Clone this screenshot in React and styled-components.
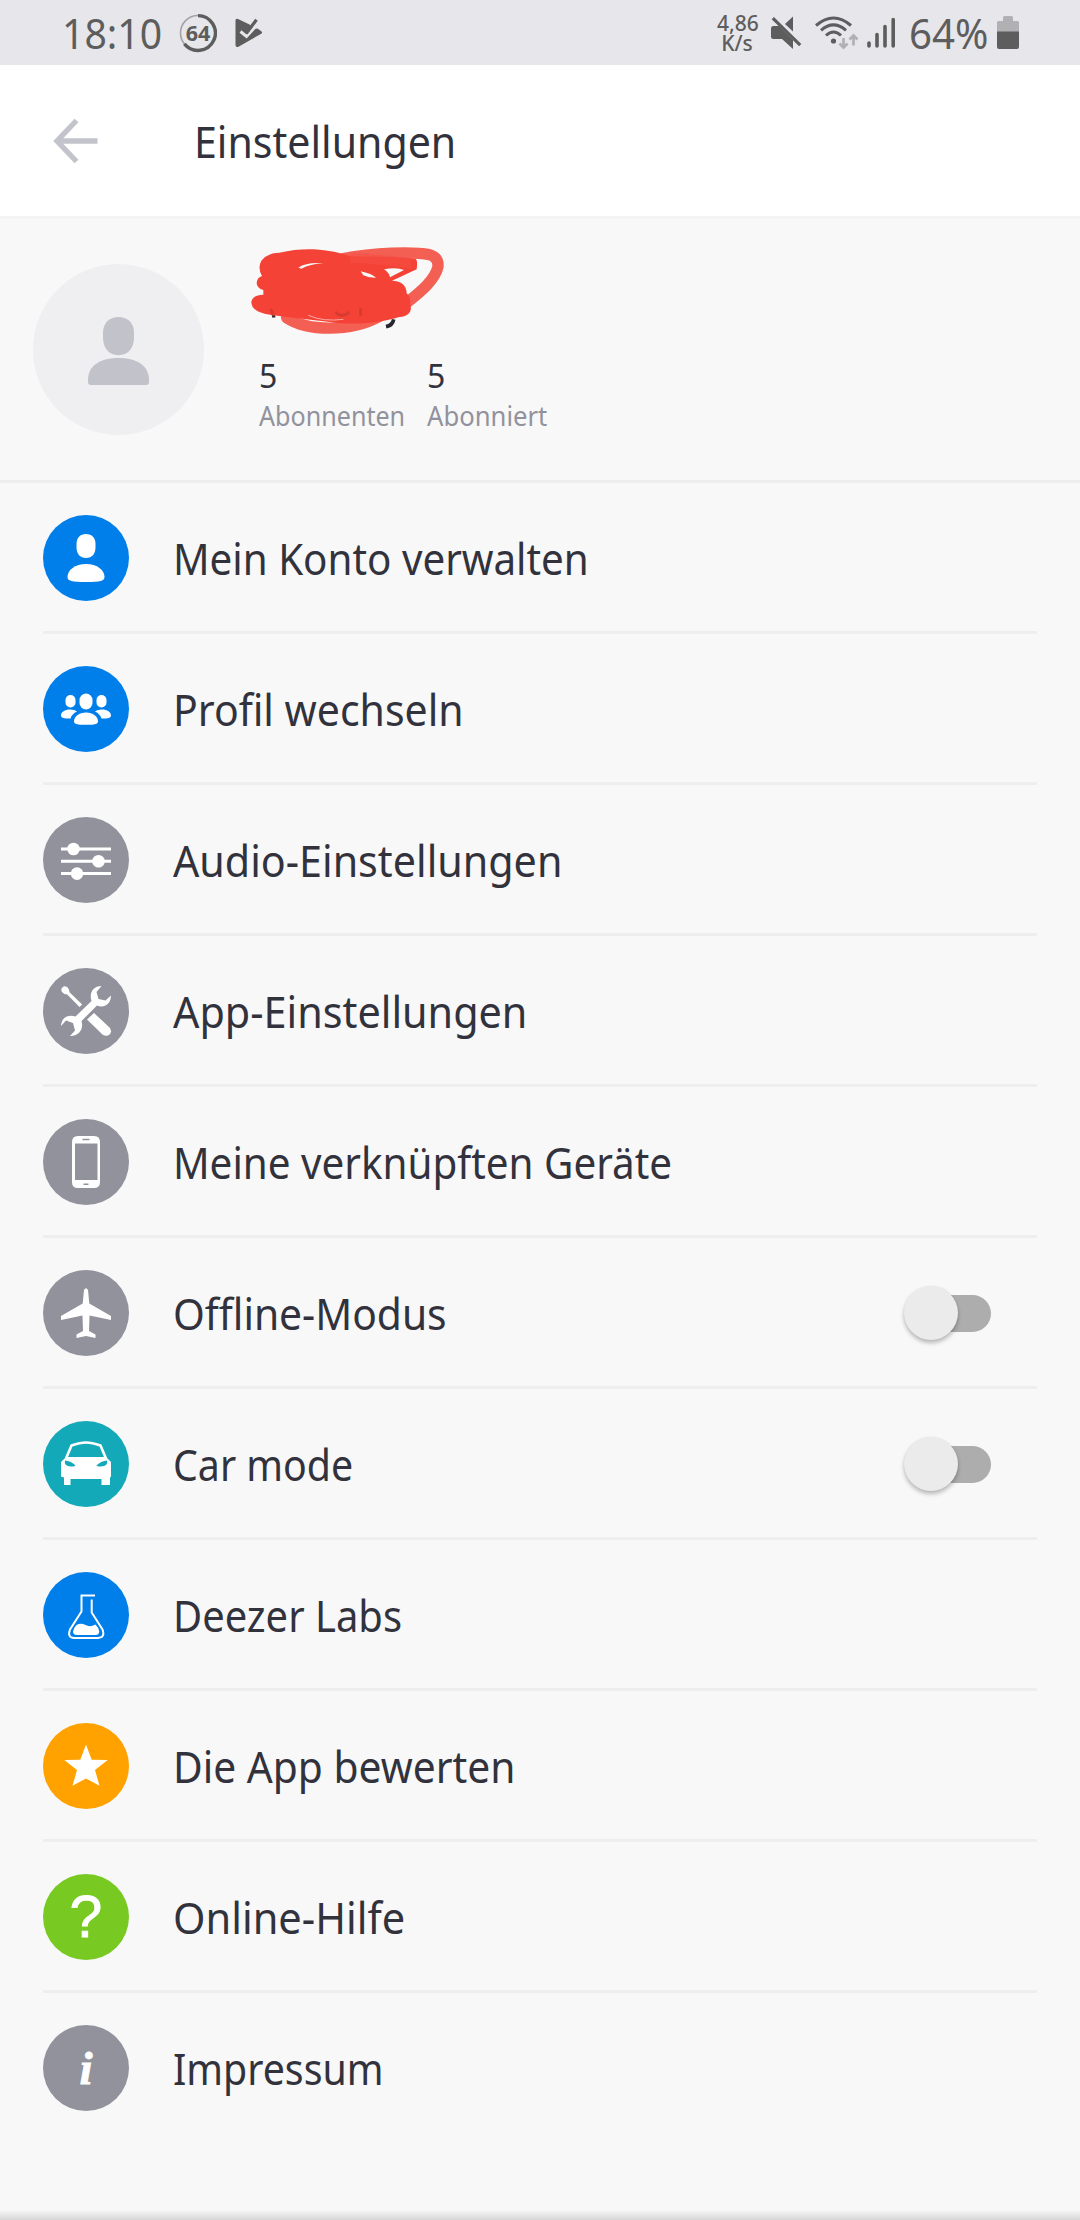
import React from 'react';
import styled, { createGlobalStyle } from 'styled-components';

const colors = {
  background: '#f8f8f8',
  statusBar: '#e7e6eb',
  status: '#5d5d5d',
  statusLight: '#b1b1b3',
  text: '#32323d',
  textLight: '#92929d',
  line: '#eeeeef',
  blue: '#007feb',
  gray: '#92929d',
  teal: '#14a9b8',
  orange: '#ffa200',
  green: '#78c922',
};

const GlobalStyle = createGlobalStyle`
  * {
    box-sizing: border-box;
  }

  body {
    margin: 0;
    background: ${colors.background};
    font-family: 'Noto Sans', 'Liberation Sans', sans-serif;
    color: ${colors.text};
  }
`;

const Screen = styled.div`
  display: flex;
  flex-direction: column;
  width: 1080px;
  height: 2220px;
  background: ${colors.background};
  overflow: hidden;

  svg {
    display: block;
    flex: none;
  }
`;

/* Labels keep their size but are drawn a little narrower */
const Text = styled.span`
  display: block;
  white-space: nowrap;
  transform: scaleX(${props => props.$stretch || 1});
  transform-origin: 0 50%;
`;

const StatusBar = styled.header`
  display: flex;
  justify-content: space-between;
  height: 65px;
  padding: 0 61px 0 62px;
  background: ${colors.statusBar};
  color: ${colors.status};
`;

const StatusGroup = styled.div`
  display: flex;
  align-items: center;
`;

const StatusIcon = styled.span`
  display: flex;
  margin-right: ${props => props.$gap || 0}px;
`;

const Clock = styled(Text)`
  width: 117px;
  font-size: 41px;
  line-height: 66px;
`;

const Speed = styled.div`
  width: 40px;
  margin-right: 14px;
  font-size: 21px;
  font-weight: 500;
  line-height: 20px;
  text-align: center;
  white-space: nowrap;
`;

const Percent = styled(Text)`
  width: 88px;
  font-size: 41px;
  line-height: 66px;
`;

const Header = styled.div`
  display: flex;
  align-items: center;
  height: 154px;
  padding-left: 52px;
  background: white;
  border-bottom: 3px solid #f3f3f4;
`;

const BackButton = styled.button`
  display: flex;
  width: 142px;
  padding: 0;
  border: 0;
  background: none;
`;

const Title = styled.h1`
  margin: 0;
  padding-top: 1px;
  font-size: 43px;
  font-weight: 400;
`;

const Profile = styled.section`
  display: flex;
  height: 264px;
  padding: 17px 33px 0;
  border-bottom: 3px solid ${colors.line};
`;

const Avatar = styled.div`
  display: flex;
  align-items: center;
  justify-content: center;
  flex: none;
  width: 171px;
  height: 171px;
  margin-top: 28px;
  border-radius: 50%;
  background: #efeff1;
`;

const ProfileInfo = styled.div`
  display: flex;
  flex-direction: column;
  margin-left: 36px;
`;

const Stats = styled.div`
  display: flex;
  margin: 7px 0 0 19px;
`;

const Stat = styled.div`
  width: 168px;
`;

const StatValue = styled.div`
  font-size: 32px;
  line-height: 46px;
`;

const StatLabel = styled(Text)`
  font-size: 27px;
  line-height: 34px;
  color: ${colors.textLight};
`;

const Menu = styled.ul`
  margin: 0;
  padding: 0 43px;
  list-style: none;
`;

const MenuItem = styled.li`
  display: flex;
  align-items: center;
  height: 151px;
  padding: 3px 46px 1px 0;
  border-bottom: 3px solid ${colors.line};

  &:last-child {
    border-bottom-color: transparent;
  }
`;

const IconCircle = styled.div`
  display: flex;
  align-items: center;
  justify-content: center;
  flex: none;
  width: 86px;
  height: 86px;
  margin-right: 44px;
  border-radius: 50%;
  background: ${props => props.$color};
  color: white;
`;

const Label = styled(Text)`
  flex: 1;
  padding-top: 2px;
  font-size: 43px;
  line-height: 58px;
`;

const QuestionMark = styled.span`
  font-family: 'Liberation Sans', Arial, sans-serif;
  font-size: 59px;
  line-height: 86px;
  -webkit-text-stroke: 0.8px currentColor;
`;

const InfoMark = styled.span`
  font-family: 'Liberation Serif', serif;
  font-size: 47px;
  font-style: italic;
  font-weight: 700;
  line-height: 84px;
  -webkit-text-stroke: 0.8px currentColor;
`;

const Switch = styled.button`
  display: flex;
  align-items: center;
  flex: none;
  padding: 0;
  border: 0;
  background: none;
`;

const Thumb = styled.span`
  z-index: 1;
  width: 54px;
  height: 54px;
  margin-right: -27px;
  border-radius: 50%;
  background: #ebebeb;
  box-shadow: 0 3px 4px rgba(0, 0, 0, 0.26), 0 0 2px rgba(0, 0, 0, 0.06);
`;

const Track = styled.span`
  width: 60px;
  height: 37px;
  border-radius: 19px;
  background: #adadad;
`;

const BottomShade = styled.div`
  flex: none;
  height: 10px;
  margin-top: auto;
  background: linear-gradient(#f7f7f7, #d6d6d6);
`;

const BatteryRing = () => (
  <svg width="38" height="40" viewBox="0 0 38 40">
    <circle cx="19" cy="20" r="17.5" fill="none" stroke="#a3a3a6" strokeWidth="1.6" />
    <path d="M19 2.6A17.4 17.4 0 1 1 5.4 30.9" fill="none" stroke={colors.status} strokeWidth="3.4" />
    <text x="19" y="27.6" textAnchor="middle" fontFamily="Noto Sans, sans-serif" fontSize="21.5" fontWeight="700" fill={colors.status}>64</text>
  </svg>
);

const PlayCheck = () => (
  <svg width="28" height="30" viewBox="0 0 28 30">
    <path d="M.5 2.500Q.5 0 3 1L14.500 6.500 19.500 11 22.500 10.500 26.300 13.200Q28 14.500 26.300 15.700L3.500 28.700Q.5 30 .5 27Z" fill={colors.status} />
    <path d="M5.500 13.500l6 5L20 9" fill="none" stroke={colors.statusBar} strokeWidth="3" />
    <path d="M9 10.500l3.300 3.500L21.500 1.800" fill="none" stroke={colors.status} strokeWidth="3.200" />
  </svg>
);

const MuteIcon = () => (
  <svg width="32" height="34" viewBox="0 0 32 34">
    <path d="M0 12.5Q0 10 2.5 10H8L22 24v9L11 23H2.5Q0 23 0 20.5Z" fill={colors.status} />
    <path d="M14 8l8-7.5v15Z" fill={colors.status} />
    <path d="M1.8 2.2l27.4 27" stroke={colors.status} strokeWidth="3.2" />
  </svg>
);

const WifiIcon = () => (
  <svg width="45" height="34" viewBox="0 0 45 34">
    <g fill="none" stroke={colors.status} strokeWidth="3">
      <path d="M1 9.5Q18.5-5.5 36 9.5" />
      <path d="M6 14.3Q18.5 3.5 31 14.3" />
      <path d="M11 19.5Q18.5 12.5 26 19.5" />
    </g>
    <circle cx="18.5" cy="25" r="2.6" fill={colors.status} />
    <path d="M28.5 22v10M24.5 27.5l4 4 4-4M38.5 29.5V19M34.5 23.5l4-4 4 4" fill="none" stroke={colors.statusLight} strokeWidth="2.7" />
  </svg>
);

const SignalIcon = () => (
  <svg width="29" height="31" viewBox="0 0 29 31">
    <path d="M2 26v3M10 17.5V29M18 9.5V29M26.2 2.5V29" fill="none" stroke={colors.status} strokeWidth="3.6" strokeLinecap="round" />
  </svg>
);

const BatteryIcon = () => (
  <svg width="22" height="34" viewBox="0 0 22 34">
    <path d="M6 5V1.5Q6 0 7.5 0h7Q16 0 16 1.5V5h4.500Q22 5 22 6.500V16H0V6.500Q0 5 1.500 5Z" fill={colors.statusLight} />
    <path d="M0 15.500h22V31q0 2-2 2H2q-2 0-2-2Z" fill={colors.status} />
  </svg>
);

const BackIcon = () => (
  <svg width="48" height="48" viewBox="0 0 48 48">
    <path d="M45.500 24H6M24.500 3.500L5 24l19.500 20.500" fill="none" stroke="#c3c3cb" strokeWidth="5.400" />
  </svg>
);

const AvatarIcon = () => (
  <svg width="61" height="70" viewBox="0 0 61 70">
    <path d="M30.500 0C40 0 46 6.500 46 16v5c0 11-6 18-15.500 18S15 32 15 21v-5C15 6.500 21 0 30.500 0Z" transform="translate(0 2) scale(1 .98)" fill="#c2c2cb" />
    <path d="M0 65C0 50 13 43 30.500 43S61 50 61 65v2q0 3-3 3H3q-3 0-3-3Z" fill="#c2c2cb" />
  </svg>
);

/* Red marker strokes that hide the profile name */
const Scribble = () => (
  <svg width="220" height="110" viewBox="0 0 660 330">
    <path d="M438 272q20-4 23-22" fill="none" stroke="#26262f" strokeWidth="11" />
    <path d="M96 241h10" stroke="#26262f" strokeWidth="7" />
    <g fill="none" stroke="#f45f54" strokeLinecap="round" strokeLinejoin="round">
      <path d="M310 68C400 50 520 46 568 56Q596 64 594 92C586 130 545 165 500 200" strokeWidth="34" />
      <path d="M140 245C200 285 330 290 420 240" strokeWidth="34" />
    </g>
    <path d="M330 60C400 62 470 62 526 68Q534 72 530 100L456 134C480 134 500 146 500 172Q514 184 510 205C520 228 500 244 478 243C420 262 330 268 270 258L140 243L90 236Q34 228 34 198Q36 178 70 176V162Q50 156 50 140Q52 124 66 120Q52 96 64 74Q84 50 118 50C190 34 255 36 330 60Z" fill="#f44336" />
    <path d="M175 95Q200 78 250 82Q210 84 184 98ZM362 106Q392 112 408 125Q386 126 370 118ZM432 100Q470 92 492 102L450 124Q448 110 432 100Z" fill={colors.background} />
    <path d="M330 66C400 66 470 78 512 82" fill="none" stroke="#f55045" strokeWidth="30" opacity="0.5" />
    <path d="M205 238Q250 258 310 250" fill="none" stroke="#f8aaa3" strokeWidth="3" />
    <g fill="none" stroke="#c9362e" strokeWidth="9" opacity="0.6">
      <path d="M92 218l8 22M286 228q20 20 42 0M362 216v24" />
    </g>
  </svg>
);

const AccountIcon = () => (
  <svg width="52" height="52" viewBox="0 0 52 52" fill="currentColor">
    <path d="M26 2c6 0 9.500 4 9.500 10v3C35.500 22 32 26 26 26s-9.500-4-9.500-11v-3C16.500 6 20 2 26 2Z" />
    <path d="M26 32c11 0 18.500 6 18.500 13 0 4-4 5-18.500 5S7.500 49 7.500 45c0-7 7.500-13 18.500-13Z" />
  </svg>
);

const GroupIcon = () => (
  <svg width="52" height="52" viewBox="0 0 52 52" fill="currentColor">
    <rect x="19.500" y="10.500" width="13" height="16" rx="6.500" />
    <rect x="5.500" y="12" width="10" height="12.500" rx="5" />
    <rect x="36.500" y="12" width="10" height="12.500" rx="5" />
    <path d="M26 29.500c7 0 12 4 12 9 0 2.500-3 3.300-12 3.300s-12-.8-12-3.300c0-5 5-9 12-9Z" />
    <path d="M10 26.500c3 0 5.500.8 7 2-3.500 1.500-5.500 4-6.500 7C4 35.500 1 35 1 32.500c0-3.500 4-6 9-6ZM42 26.500c-3 0-5.500.8-7 2 3.500 1.500 5.500 4 6.500 7 6.500 0 9.500-.5 9.500-3 0-3.500-4-6-9-6Z" />
  </svg>
);

const SlidersIcon = () => (
  <svg width="52" height="52" viewBox="0 0 52 52" fill="currentColor">
    <path d="M1 15h50M1 27.300h50M1 39.600h50" stroke="currentColor" strokeWidth="3" />
    <circle cx="13.500" cy="15" r="6.300" />
    <circle cx="38.500" cy="27.300" r="6.300" />
    <circle cx="17" cy="39.600" r="6.300" />
  </svg>
);

const ToolsIcon = () => (
  <svg width="52" height="52" viewBox="0 0 52 52" fill="currentColor">
    <path d="M3.500 1.500Q7 .5 9 4.500l.5 2.700L22.200 19.500 19.500 22 7.200 9.500 4.500 9Q.5 6.500 1.500 3.500Z" />
    <path d="M34 28l15.500 14.500q3 4 0 7-3 2.500-7 0L27 34.500Z" />
    <path d="M41.500 1C33 1 29 8 31.500 16L15.500 31.500C9 29 1.500 32 1 41l5-5.500 7 2.500 2 7.500-5 5.500c9 .5 14-7 11.500-15l15.500-15.500C44 23.500 51 19 51 10.500l-5.500 5-7-1.500-2-7Z" />
  </svg>
);

const PhoneIcon = () => (
  <svg width="28" height="52" viewBox="0 0 28 52">
    <path fillRule="evenodd" fill="currentColor" d="M6 0h16q6 0 6 6v40q0 6-6 6H6q-6 0-6-6V6q0-6 6-6ZM3 7.500v36.500h22.500V7.500ZM10.500 2.800v1.400h7V2.800ZM11.500 47.600v1.400h5v-1.400Z" />
  </svg>
);

const PlaneIcon = () => (
  <svg width="52" height="52" viewBox="0 0 52 52" fill="currentColor">
    <path d="M24 3q2-3.500 4 0l1.300 13.500L51 29v4L29.500 28.500 29 44l6.500 3.500V51L26 49l-9.500 2v-3.500L23 44l-.5-15.500L1 33v-4l21.700-12.500Z" />
  </svg>
);

const CarIcon = () => (
  <svg width="52" height="52" viewBox="0 0 52 52">
    <path d="M6 20.500L11.500 7.500Q20 4.500 26 4.500t14.500 3L46 20.500" fill="none" stroke="currentColor" strokeWidth="2.600" strokeLinejoin="round" />
    <path fillRule="evenodd" fill="currentColor" d="M6 19h40l5 5v14.500l-1 1V47h-8.500v-6h-31v6H4v-7.500l-3-1V24ZM5 22.500q-1.500 5.500 6 6 4 .3 4.500-1Q11 23 5 22.500ZM47 22.500Q41 23 36.500 27.500q.5 1.300 4.500 1 7.500-.5 6-6Z" />
  </svg>
);

const FlaskIcon = () => (
  <svg width="52" height="52" viewBox="0 0 52 52">
    <path d="M35 6.500H21.500V22.500L10 40.500Q7 48.500 14 49H38Q45.500 48.500 42.500 40.500L31.700 23.500V10.500" fill="none" stroke="currentColor" strokeWidth="2" />
    <path d="M16.500 36Q21 33.500 25.500 36t10-.500Q39 39 39.300 42.500 39 46 35.500 46H17Q13 46 13 42.500 13.500 39 16.500 36Z" fill="currentColor" />
  </svg>
);

const StarIcon = () => (
  <svg width="52" height="52" viewBox="0 0 52 52" fill="currentColor">
    <path d="M26 4.500l5.700 15.200 16 .3L35 30l4.500 15.800L26 38.500l-13.500 7.300L17 30 4.300 20l16-.3Z" />
  </svg>
);

const menuItems = [
  { label: 'Mein Konto verwalten', color: colors.blue, icon: <AccountIcon />, stretch: 0.938 },
  { label: 'Profil wechseln', color: colors.blue, icon: <GroupIcon />, stretch: 0.953 },
  { label: 'Audio-Einstellungen', color: colors.gray, icon: <SlidersIcon />, stretch: 0.959 },
  { label: 'App-Einstellungen', color: colors.gray, icon: <ToolsIcon />, stretch: 0.961 },
  { label: 'Meine verknüpften Geräte', color: colors.gray, icon: <PhoneIcon />, stretch: 0.939 },
  { label: 'Offline-Modus', color: colors.gray, icon: <PlaneIcon />, stretch: 0.948, toggle: true },
  { label: 'Car mode', color: colors.teal, icon: <CarIcon />, stretch: 0.914, toggle: true },
  { label: 'Deezer Labs', color: colors.blue, icon: <FlaskIcon />, stretch: 0.929 },
  { label: 'Die App bewerten', color: colors.orange, icon: <StarIcon />, stretch: 0.947 },
  { label: 'Online-Hilfe', color: colors.green, icon: <QuestionMark>?</QuestionMark>, stretch: 0.967 },
  { label: 'Impressum', color: colors.gray, icon: <InfoMark>i</InfoMark>, stretch: 0.914 },
];

const stats = [
  { value: '5', label: 'Abonnenten', stretch: 0.93 },
  { value: '5', label: 'Abonniert', stretch: 0.95 },
];

const App = () => (
  <>
    <GlobalStyle />
    <Screen>
      <StatusBar>
        <StatusGroup>
          <Clock $stretch={0.955}>18:10</Clock>
          <StatusIcon $gap={18}><BatteryRing /></StatusIcon>
          <StatusIcon><PlayCheck /></StatusIcon>
        </StatusGroup>
        <StatusGroup>
          <Speed>4,86<br />K/s</Speed>
          <StatusIcon $gap={12}><MuteIcon /></StatusIcon>
          <StatusIcon $gap={7}><WifiIcon /></StatusIcon>
          <StatusIcon $gap={13}><SignalIcon /></StatusIcon>
          <Percent $stretch={0.98}>64%</Percent>
          <StatusIcon><BatteryIcon /></StatusIcon>
        </StatusGroup>
      </StatusBar>

      <Header>
        <BackButton aria-label="Zurück"><BackIcon /></BackButton>
        <Title><Text $stretch={0.955}>Einstellungen</Text></Title>
      </Header>

      <Profile>
        <Avatar><AvatarIcon /></Avatar>
        <ProfileInfo>
          <Scribble />
          <Stats>
            {stats.map(stat => (
              <Stat key={stat.label}>
                <StatValue>{stat.value}</StatValue>
                <StatLabel $stretch={stat.stretch}>{stat.label}</StatLabel>
              </Stat>
            ))}
          </Stats>
        </ProfileInfo>
      </Profile>

      <Menu>
        {menuItems.map(item => (
          <MenuItem key={item.label}>
            <IconCircle $color={item.color}>{item.icon}</IconCircle>
            <Label $stretch={item.stretch}>{item.label}</Label>
            {item.toggle && (
              <Switch role="switch" aria-checked="false" aria-label={item.label}>
                <Thumb />
                <Track />
              </Switch>
            )}
          </MenuItem>
        ))}
      </Menu>

      <BottomShade />
    </Screen>
  </>
);

export default App;
